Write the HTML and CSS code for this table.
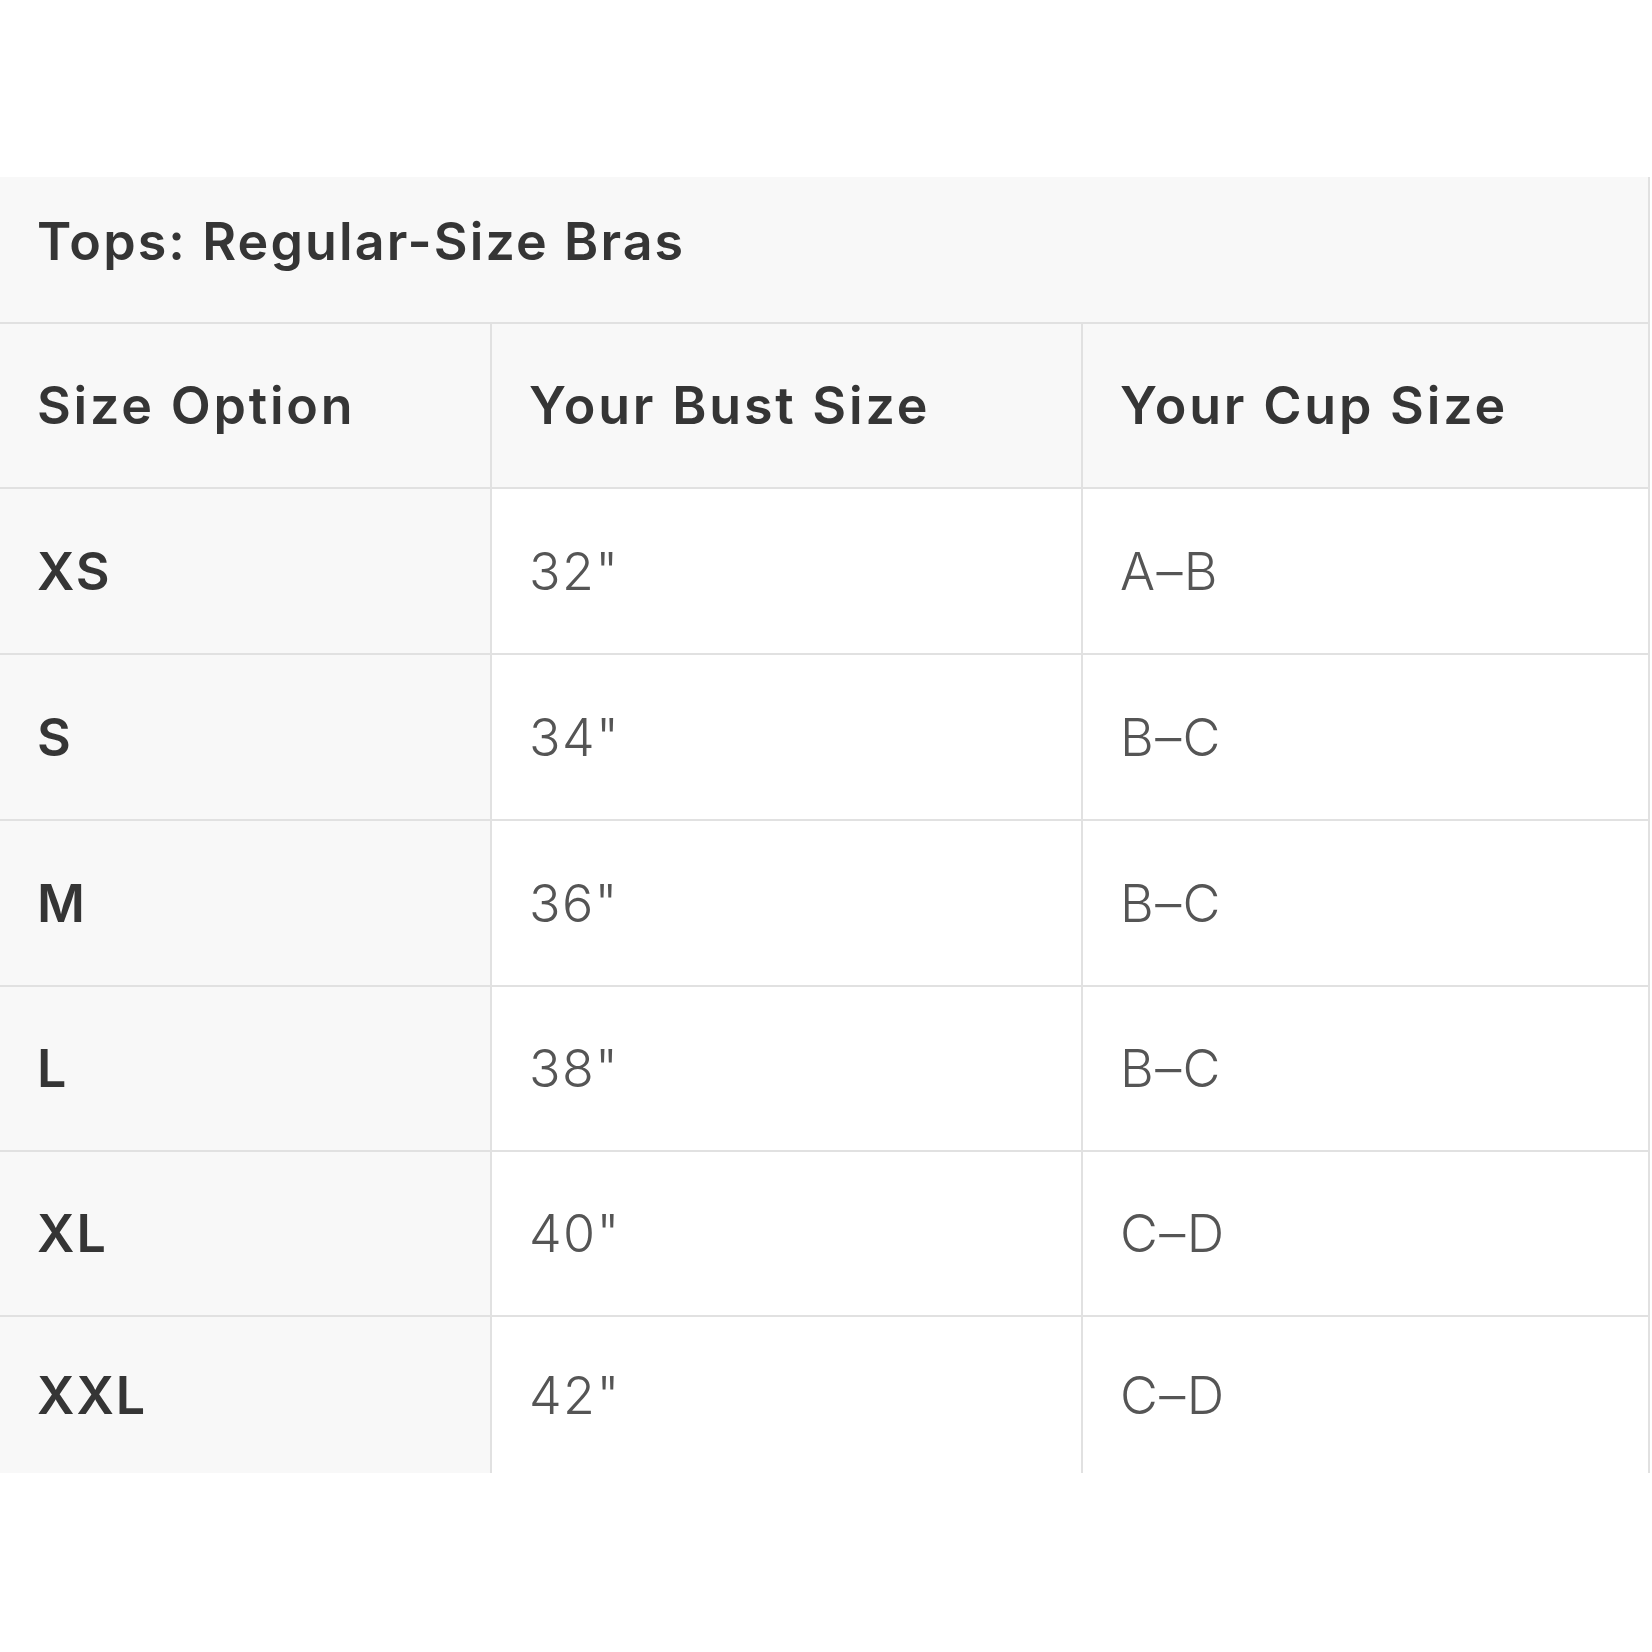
FILE: index.html
```html
<!DOCTYPE html>
<html lang="en">
<head>
<meta charset="utf-8">
<title>Tops: Regular-Size Bras</title>
<link rel="stylesheet" href="styles.css">
</head>
<body>
<div class="page">
  <div class="chart" role="table">
    <div class="cell title" role="rowheader">Tops: Regular-Size Bras</div>

    <div class="cell head" role="columnheader">Size Option</div>
    <div class="cell head" role="columnheader">Your Bust Size</div>
    <div class="cell head" role="columnheader">Your Cup Size</div>

    <div class="cell size">XS</div>
    <div class="cell val">32"</div>
    <div class="cell val">A–B</div>

    <div class="cell size">S</div>
    <div class="cell val">34"</div>
    <div class="cell val">B–C</div>

    <div class="cell size">M</div>
    <div class="cell val">36"</div>
    <div class="cell val">B–C</div>

    <div class="cell size">L</div>
    <div class="cell val">38"</div>
    <div class="cell val">B–C</div>

    <div class="cell size">XL</div>
    <div class="cell val">40"</div>
    <div class="cell val">C–D</div>

    <div class="cell size end">XXL</div>
    <div class="cell val end">42"</div>
    <div class="cell val end">C–D</div>
  </div>
</div>
</body>
</html>
```

FILE: styles.css
```css
html, body {
  margin: 0;
  padding: 0;
  background: #ffffff;
}

.page {
  padding-top: 177px;
}

.chart {
  display: grid;
  width: 1650px;
  grid-template-columns: 492px 591px 567px;
  grid-template-rows: 147px 165px 166px 166px 166px 165px 165px 156px;
  font-family: "Inter", "Liberation Sans", sans-serif;
  font-size: 52px;
  letter-spacing: 2.4px;
}

.cell {
  box-sizing: border-box;
  display: flex;
  align-items: center;
  padding-left: 37px;
  border-right: 2px solid #e1e1e1;
  border-bottom: 2px solid #e1e1e1;
  white-space: nowrap;
}

.title {
  grid-column: 1 / -1;
  background: #f8f8f8;
  padding-bottom: 17px;
  font-weight: 600;
  color: #353535;
  letter-spacing: 2.1px;
}

.head {
  background: #f8f8f8;
  font-weight: 600;
  color: #353535;
  letter-spacing: 2.8px;
}

.size {
  background: #f8f8f8;
  font-weight: 600;
  color: #353535;
  letter-spacing: 2px;
}

.val {
  background: #ffffff;
  font-weight: 300;
  color: #555555;
  letter-spacing: 1.4px;
}

.end {
  border-bottom: none;
}
```
